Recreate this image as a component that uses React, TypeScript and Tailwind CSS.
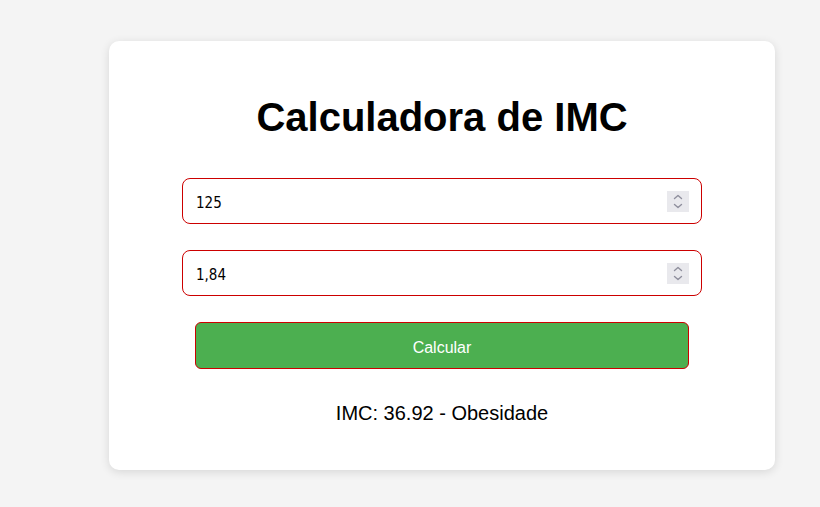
import React from "react";

function Spinner() {
  return (
    <div className="flex h-[21px] w-[22px] flex-col items-center justify-center bg-[#e9e9ed]">
      <svg width="12" height="17" viewBox="0 0 12 17" fill="none" stroke="#8f8f9d" strokeWidth="1.4" strokeLinecap="round" strokeLinejoin="round">
        <path d="M2.5 5.5 L6 2.5 L9.5 5.5" />
        <path d="M2.5 11.5 L6 14.5 L9.5 11.5" />
      </svg>
    </div>
  );
}

function Field({ value }: { value: string }) {
  return (
    <div className="flex h-[46px] w-full items-center justify-between rounded-[8px] border border-[#cc0000] bg-white pl-[13px] pr-[12px]">
      <span className="mt-[4px] text-[15px] text-black [font-family:'DejaVu_Sans_Condensed','DejaVu_Sans',sans-serif]">{value}</span>
      <Spinner />
    </div>
  );
}

export default function App() {
  return (
    <div className="min-h-[507px] w-full bg-[#f4f4f4] pt-[41px] pb-[38px] [font-family:'Liberation_Sans',Arial,sans-serif]">
      <div className="ml-[109px] w-[666px] rounded-[10px] bg-white pb-[45px] pt-[50px] shadow-[0_2px_10px_rgba(0,0,0,0.12)]">
        <h1 className="text-center text-[40px] font-bold leading-[52px] text-black">Calculadora de IMC</h1>
        <div className="mt-[35px] flex flex-col gap-[26px] px-[73px]">
          <Field value="125" />
          <Field value="1,84" />
        </div>
        <div className="mt-[26px] px-[86px]">
          <div className="flex h-[47px] w-full items-center justify-center rounded-[6px] border border-[#cc0000] bg-[#4caf50] pt-[4px] text-[16px] text-white">
            Calcular
          </div>
        </div>
        <p className="mt-[32px] text-center text-[20px] leading-[24px] text-black">IMC: 36.92 - Obesidade</p>
      </div>
    </div>
  );
}
